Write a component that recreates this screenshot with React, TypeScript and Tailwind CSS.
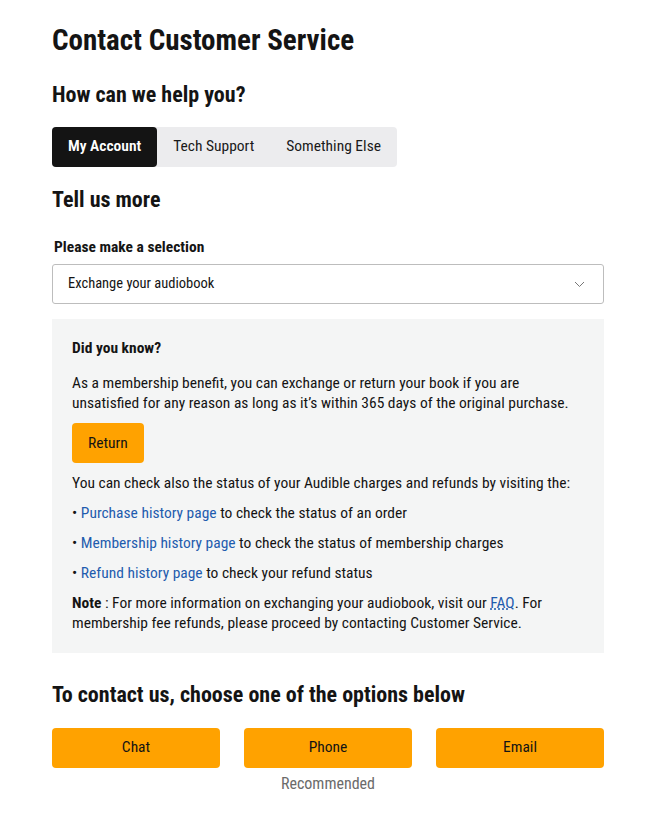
export default function App() {
  return (
    <div className="min-h-screen bg-white text-[#141414] font-['Roboto_Condensed','Open_Sans',sans-serif]">
      <div className="w-[656px] px-[52px] pt-[24px] pb-8">
        <h1 className="text-[29px] font-bold leading-[32px]">Contact Customer Service</h1>

        <h2 className="mt-[25px] text-[22px] font-bold leading-[28px]">How can we help you?</h2>

        <div className="mt-[18px] inline-flex h-[40px] rounded bg-[#ececee] text-[15.5px]">
          <button className="rounded bg-[#141414] px-[16px] font-semibold text-white">My Account</button>
          <button className="px-[16px] text-[#1a1a1a]">Tech Support</button>
          <button className="px-[16px] text-[#1a1a1a]">Something Else</button>
        </div>

        <h2 className="mt-[19px] text-[22px] font-bold leading-[28px]">Tell us more</h2>

        <label className="mt-[24px] block pl-[2px] text-[15.5px] font-bold leading-[18px]">Please make a selection</label>
        <div className="mt-[8px] flex h-[40px] items-center justify-between rounded-[3px] border border-[#bdbdbd] pl-[15px] pr-[18px] text-[14.5px]">
          <span>Exchange your audiobook</span>
          <svg width="11" height="7" viewBox="0 0 11 7" fill="none" stroke="#777" strokeWidth="1">
            <path d="M1 1l4.5 4.5L10 1" />
          </svg>
        </div>

        <div className="mt-[15px] bg-[#f4f5f5] px-[20px] pt-[19px] pb-[20px] text-[15.5px] leading-[20px]">
          <p className="text-[15.5px] font-bold">Did you know?</p>
          <p className="mt-[15px]">
            As a membership benefit, you can exchange or return your book if you are unsatisfied for any reason as long as it’s within 365 days of the original purchase.
          </p>
          <button className="mt-[10px] h-[40px] rounded bg-[#ffa200] px-[16px]">Return</button>
          <p className="mt-[10px]">You can check also the status of your Audible charges and refunds by visiting the:</p>
          <p className="mt-[10px]">• <a className="text-[#1f5cae]">Purchase history page</a> to check the status of an order</p>
          <p className="mt-[10px]">• <a className="text-[#1f5cae]">Membership history page</a> to check the status of membership charges</p>
          <p className="mt-[10px]">• <a className="text-[#1f5cae]">Refund history page</a> to check your refund status</p>
          <p className="mt-[10px]">
            <span className="font-bold">Note</span> : For more information on exchanging your audiobook, visit our{' '}
            <a className="text-[#1f5cae] underline decoration-dotted">FAQ</a>. For membership fee refunds, please proceed by contacting Customer Service.
          </p>
        </div>

        <h2 className="mt-[28px] text-[22px] font-bold leading-[28px]">To contact us, choose one of the options below</h2>

        <div className="mt-[19px] grid grid-cols-3 gap-[24px] text-[15.5px]">
          <div>
            <button className="h-[40px] w-full rounded bg-[#ffa200]">Chat</button>
          </div>
          <div className="flex flex-col items-center">
            <button className="h-[40px] w-full rounded bg-[#ffa200]">Phone</button>
            <span className="mt-[4px] text-[16px] text-[#6b6b6b]">Recommended</span>
          </div>
          <div>
            <button className="h-[40px] w-full rounded bg-[#ffa200]">Email</button>
          </div>
        </div>
      </div>
    </div>
  );
}
